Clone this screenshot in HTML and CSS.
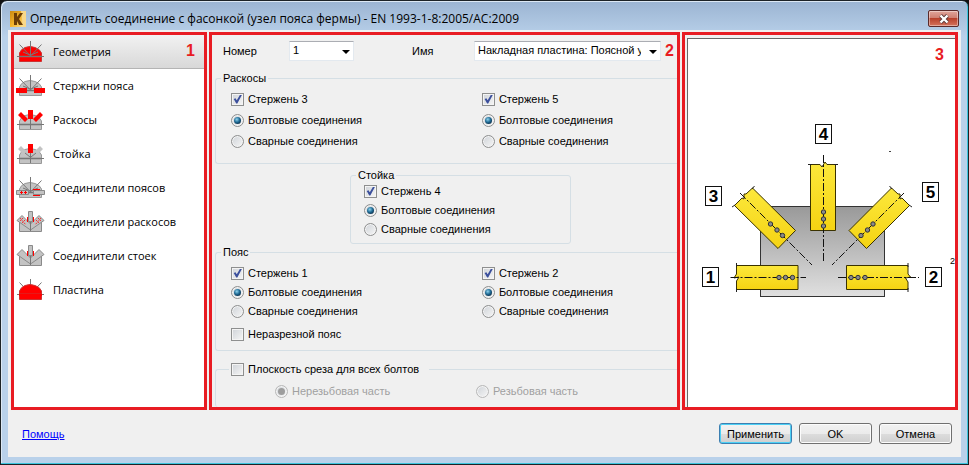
FILE: index.html
```html
<!DOCTYPE html>
<html lang="ru">
<head>
    <meta charset="UTF-8">
    <meta name="viewport" content="width=device-width, initial-scale=1.0">
    <title>Определить соединение с фасонкой</title>
    <link rel="stylesheet" href="styles.css">
</head>
<body>
    <!-- Shared icon parts -->
    <svg class="sprite" aria-hidden="true">
        <defs>
            <g id="dome">
                <path d="M3.5 16V13Q5 9 9 7.500Q14 5.500 19 7.500Q24 9 25.500 13V16Z"/>
                <path d="M3.500 17H25.500V21.500H3.500Z"/>
            </g>
            <path id="rays" fill="none" stroke="#777" d="M1 16.500H28M14.500 1V16M14 15.500L3.500 4.500M15 15.500L25.500 4.500M14 15L7 12M15 15L22 12"/>
            <path id="gusset" fill="#c3c3c3" stroke="#8a8a8a" d="M3.500 12H25.500V21.500H3.500Z"/>
            <g id="arms" fill="#c3c3c3" stroke="#8a8a8a">
                <path d="M1 10.500L6 5.500L14.500 14V20Z"/>
                <path d="M28 10.500L23 5.500L14.500 14V20Z"/>
                <path d="M12.500 1.500H16.500V11.500H12.500Z"/>
                <path d="M14.500 12V21" fill="none" stroke="#777"/>
            </g>
        </defs>
    </svg>

    <div class="window">
        <header class="titlebar">
            <svg class="app-icon" width="16" height="16" viewBox="0 0 16 16">
                <defs>
                    <linearGradient id="gold" x1="0" y1="0" x2="1" y2="1">
                        <stop offset="0" stop-color="#c98a12"/>
                        <stop offset="0.500" stop-color="#f3b32a"/>
                        <stop offset="1" stop-color="#ffe9a8"/>
                    </linearGradient>
                </defs>
                <rect width="16" height="16" fill="url(#gold)"/>
                <path d="M11 0H16V16H13Z" fill="#f9d88a"/>
                <path d="M4 2H7V6L10 2H13L9 8L13 14H9L7 10V14H4Z" fill="#6b3d05"/>
            </svg>
            <h1>Определить соединение с фасонкой (узел пояса фермы) - EN 1993-1-8:2005/AC:2009</h1>
            <button type="button" class="close" aria-label="Закрыть">
                <svg width="12" height="10" viewBox="0 0 12 10">
                    <path d="M2.500 1.500L9.500 8.500M9.500 1.500L2.500 8.500" stroke="#5b3a3a" stroke-width="4"/>
                    <path d="M2.500 1.500L9.500 8.500M9.500 1.500L2.500 8.500" stroke="#fff" stroke-width="2.400"/>
                </svg>
            </button>
        </header>

        <div class="client">
            <div class="panels">
                <nav class="panel sidebar">
                    <span class="mark">1</span>
                    <button type="button" class="nav-item active">
                        <svg width="30" height="24" viewBox="0 0 30 24"><use href="#dome" fill="#f00" stroke="#c33"/><use href="#rays"/></svg>
                        Геометрия
                    </button>
                    <button type="button" class="nav-item">
                        <svg width="30" height="24" viewBox="0 0 30 24">
                            <use href="#dome" fill="#c3c3c3" stroke="#999"/><use href="#rays"/>
                            <path d="M0 14H11V19H0ZM18 14H29V19H18Z" fill="#f00"/>
                        </svg>
                        Стержни пояса
                    </button>
                    <button type="button" class="nav-item">
                        <svg width="30" height="24" viewBox="0 0 30 24">
                            <use href="#dome" fill="#c3c3c3" stroke="#999"/>
                            <path d="M1 16.500H28M14.500 10V21" stroke="#777"/>
                            <path d="M12 2H17V11H12ZM2 7L5 4L12 11L9 14ZM27 7L24 4L17 11L20 14Z" fill="#f00"/>
                        </svg>
                        Раскосы
                    </button>
                    <button type="button" class="nav-item">
                        <svg width="30" height="24" viewBox="0 0 30 24">
                            <use href="#dome" fill="#c3c3c3" stroke="#999"/>
                            <path d="M2 7L5 4L12 11L9 14ZM27 7L24 4L17 11L20 14Z" fill="#c3c3c3"/>
                            <path d="M1 16.500H28M14.500 10V21M14 15L9 11M15 15L20 11" stroke="#777" fill="none"/>
                            <path d="M12 2H17V11H12Z" fill="#f00"/>
                        </svg>
                        Стойка
                    </button>
                    <button type="button" class="nav-item">
                        <svg width="30" height="24" viewBox="0 0 30 24">
                            <use href="#dome" fill="#c3c3c3" stroke="#999"/><use href="#rays"/>
                            <path d="M0.500 14.500H12.500V18.500H0.500ZM17.500 14.500H28.500V18.500H17.500Z" fill="#c3c3c3" stroke="#888"/>
                            <path d="M4 16.500H7M8 16.500H11M5.500 15V18M9.500 15V18M17 13.500H24M17 19.500H24" stroke="#f00"/>
                        </svg>
                        Соединители поясов
                    </button>
                    <button type="button" class="nav-item">
                        <svg width="30" height="24" viewBox="0 0 30 24">
                            <use href="#gusset"/><use href="#arms"/>
                            <path d="M4 8L10 15M7 8L4 11M9 10L6 13M25 8L19 15M22 8L25 11M20 10L23 13" stroke="#e33" stroke-dasharray="2 1"/>
                            <path d="M11.500 7V12M17.500 7V12" stroke="#f00"/>
                        </svg>
                        Соединители раскосов
                    </button>
                    <button type="button" class="nav-item">
                        <svg width="30" height="24" viewBox="0 0 30 24">
                            <use href="#gusset"/><use href="#arms"/>
                            <path d="M11.500 7V12M17.500 7V12" stroke="#f00"/>
                        </svg>
                        Соединители стоек
                    </button>
                    <button type="button" class="nav-item">
                        <svg width="30" height="24" viewBox="0 0 30 24">
                            <use href="#rays"/><use href="#dome" fill="#f00" stroke="#c33"/>
                            <path d="M3 16H26V18H3Z" fill="#f00"/>
                        </svg>
                        Пластина
                    </button>
                </nav>

                <form class="panel settings">
                    <span class="mark">2</span>
                    <div class="top-row">
                        <label for="number">Номер</label>
                        <span class="select number">
                            <select id="number" name="number">
                                <option>1</option>
                            </select>
                        </span>
                        <label for="name">Имя</label>
                        <span class="select name">
                            <select id="name" name="name">
                                <option>Накладная пластина: Поясной узел</option>
                            </select>
                        </span>
                    </div>

                    <fieldset class="group diagonals">
                        <legend>Раскосы</legend>
                        <div class="columns">
                            <div class="options">
                                <label><input type="checkbox" checked>Стержень 3</label>
                                <label><input type="radio" name="bar3" checked>Болтовые соединения</label>
                                <label><input type="radio" name="bar3">Сварные соединения</label>
                            </div>
                            <div class="options">
                                <label><input type="checkbox" checked>Стержень 5</label>
                                <label><input type="radio" name="bar5" checked>Болтовые соединения</label>
                                <label><input type="radio" name="bar5">Сварные соединения</label>
                            </div>
                        </div>
                    </fieldset>

                    <fieldset class="group post">
                        <legend>Стойка</legend>
                        <div class="options">
                            <label><input type="checkbox" checked>Стержень 4</label>
                            <label><input type="radio" name="bar4" checked>Болтовые соединения</label>
                            <label><input type="radio" name="bar4">Сварные соединения</label>
                        </div>
                    </fieldset>

                    <fieldset class="group chord">
                        <legend>Пояс</legend>
                        <div class="columns">
                            <div class="options">
                                <label><input type="checkbox" checked>Стержень 1</label>
                                <label><input type="radio" name="bar1" checked>Болтовые соединения</label>
                                <label><input type="radio" name="bar1">Сварные соединения</label>
                                <label class="spaced"><input type="checkbox">Неразрезной пояс</label>
                            </div>
                            <div class="options">
                                <label><input type="checkbox" checked>Стержень 2</label>
                                <label><input type="radio" name="bar2" checked>Болтовые соединения</label>
                                <label><input type="radio" name="bar2">Сварные соединения</label>
                            </div>
                        </div>
                    </fieldset>

                    <fieldset class="group shear">
                        <legend><label><input type="checkbox">Плоскость среза для всех болтов</label></legend>
                        <div class="choices">
                            <label><input type="radio" name="shear" checked disabled>Нерезьбовая часть</label>
                            <label><input type="radio" name="shear" disabled>Резьбовая часть</label>
                        </div>
                    </fieldset>
                </form>

                <section class="panel preview">
                    <span class="mark">3</span>
                    <div class="canvas">
                        <svg class="diagram" viewBox="0 0 267 200">
                            <defs>
                                <linearGradient id="plate" x1="0" y1="0" x2="0" y2="1">
                                    <stop offset="0" stop-color="#999"/>
                                    <stop offset="1" stop-color="#e0e0e0"/>
                                </linearGradient>
                                <linearGradient id="steel" x1="0" y1="0" x2="0" y2="1">
                                    <stop offset="0" stop-color="#fce83c"/>
                                    <stop offset="1" stop-color="#f5d312"/>
                                </linearGradient>
                            </defs>
                            <rect x="72.500" y="96.500" width="124" height="90" fill="url(#plate)" stroke="#333"/>

                            <g fill="url(#steel)" stroke="#3a3200">
                                <path d="M48.500 155.500H110V179.500H48.500V171L51 167L46 168L48.500 164Z"/>
                                <path d="M158.500 155.500H220V164L222.500 167L217.500 168L220 172V179.500H158.500Z"/>
                                <path d="M122.500 54.500H132L134 57L137 52L139 54.500H147.500V120.500H122.500Z"/>
                                <path d="M64.500 78L107.500 120.500L90 138.500L46.500 95.500L54 88L56 89L56 84L58 84Z"/>
                                <path d="M203.500 78L161 120.500L178.500 138.500L221.500 95.500L214 88L212 89L212 84L210 84Z"/>
                            </g>
                            <path d="M48.500 153V157M48.500 178V182M220 153V157M220 178V182M120 54.500H124M146 54.500H150M66.500 76L64 79M44 97L47 95M201.500 76L204 79M224 97L221 95" stroke="#222"/>

                            <g stroke="#111" stroke-dasharray="8 2 2 2">
                                <path d="M42.500 167.500H118"/>
                                <path d="M150 167.500H231"/>
                                <path d="M135.500 45V152"/>
                                <path d="M52 83L124 155"/>
                                <path d="M216 83L144 155"/>
                            </g>

                            <g fill="#8a8a8a" stroke="#333">
                                <circle cx="91" cy="167.500" r="2.200"/><circle cx="97.500" cy="167.500" r="2.200"/><circle cx="104.500" cy="167.500" r="2.200"/>
                                <circle cx="163" cy="167.500" r="2.200"/><circle cx="170" cy="167.500" r="2.200"/><circle cx="177" cy="167.500" r="2.200"/>
                                <circle cx="135.500" cy="102" r="2.200"/><circle cx="135.500" cy="109" r="2.200"/><circle cx="135.500" cy="116" r="2.200"/>
                                <circle cx="82.500" cy="114" r="2.200"/><circle cx="89" cy="120" r="2.200"/><circle cx="94.500" cy="125.500" r="2.200"/>
                                <circle cx="185" cy="114" r="2.200"/><circle cx="179.500" cy="120" r="2.200"/><circle cx="173" cy="125.500" r="2.200"/>
                            </g>

                            <g fill="#fff" stroke="#111">
                                <rect x="14.500" y="157.500" width="16" height="19"/>
                                <rect x="237.500" y="157.500" width="16" height="19"/>
                                <rect x="17.500" y="76.500" width="16" height="19"/>
                                <rect x="127.500" y="14.500" width="16" height="19"/>
                                <rect x="234.500" y="72.500" width="16" height="19"/>
                            </g>
                            <g class="bar-number">
                                <text x="22.500" y="173">1</text>
                                <text x="245.500" y="173">2</text>
                                <text x="25.500" y="92">3</text>
                                <text x="135.500" y="30">4</text>
                                <text x="242.500" y="88">5</text>
                            </g>
                            <path d="M201 41.500H203" stroke="#444"/>
                            <text class="scale" x="262" y="154">2</text>
                        </svg>
                    </div>
                </section>
            </div>

            <footer class="footer">
                <a href="#help">Помощь</a>
                <div class="buttons">
                    <button type="button" class="default">Применить</button>
                    <button type="button">OK</button>
                    <button type="button">Отмена</button>
                </div>
            </footer>
        </div>
    </div>
</body>
</html>
```
FILE: styles.css
```css
* {
    box-sizing: border-box;
}

body {
    margin: 0;
    background-color: #111;
    font-family: "Liberation Sans", Arial, sans-serif;
    font-size: 11px;
    color: #000;
}

.sprite {
    position: absolute;
    width: 0;
    height: 0;
}

.window {
    display: flex;
    flex-direction: column;
    height: 100vh;
    padding: 0 7px 7px;
    border: 1px solid #1c2226;
    border-radius: 7px 7px 0 0;
    background: linear-gradient(#9bb4d2, #b9d1ea 36px);
    box-shadow: inset -1px -1px 0 #3cc4dc, inset 1px 1px 0 #dce8f4;
}

.titlebar {
    display: flex;
    align-items: center;
    gap: 4px;
    height: 29px;
    padding: 6px 2px 0;
}

.titlebar h1 {
    flex: 1;
    margin: 0;
    font-family: "Open Sans", "Noto Sans", sans-serif;
    font-size: 12px;
    font-weight: normal;
    line-height: 18px;
    white-space: nowrap;
}

.close {
    display: flex;
    align-items: center;
    justify-content: center;
    width: 31px;
    height: 17px;
    padding: 0;
    border: 1px solid #5a2a2a;
    border-radius: 2px;
    background: linear-gradient(#e0a59b, #d08072 45%, #b8412c 50%, #d4735c);
    box-shadow: inset 0 0 0 1px rgba(255, 255, 255, 0.4);
}

.client {
    display: flex;
    flex: 1;
    flex-direction: column;
    min-height: 0;
    background-color: #f0f0f0;
}

/* Panels */

.panels {
    display: grid;
    flex: 1;
    grid-template-columns: 196px 1fr 276px;
    gap: 2px;
    min-height: 0;
    padding: 2px 3px 0;
}

.panel {
    position: relative;
    min-width: 0;
    min-height: 0;
    overflow: hidden;
    border: 3px solid #e81c23;
}

.mark {
    position: absolute;
    top: 6px;
    right: 9px;
    z-index: 1;
    color: #e81c23;
    font-size: 16px;
    font-weight: bold;
    line-height: 20px;
}

/* Sidebar */

.sidebar {
    background-color: #fff;
}

.nav-item {
    display: flex;
    align-items: center;
    gap: 7px;
    width: 100%;
    height: 34px;
    padding: 0 2px;
    border: 0;
    border-bottom: 1px solid transparent;
    background: none;
    font-family: "Open Sans", "Noto Sans", sans-serif;
    font-size: 11px;
    text-align: left;
    white-space: nowrap;
}

.nav-item.active {
    border-bottom-color: #b4b4b4;
    background: linear-gradient(#f2f2f2, #d8d8d8);
}

/* Settings form */

.settings {
    display: flex;
    flex-direction: column;
    padding-left: 3px;
}

.settings .mark {
    right: 3px;
}

.top-row {
    display: flex;
    align-items: center;
    height: 36px;
    padding: 0 16px 4px 8px;
}

.top-row label {
    width: 66px;
}

.select {
    position: relative;
    height: 20px;
}

.select.number {
    width: 65px;
    margin-right: 58px;
}

.select.number + label {
    width: 62px;
}

.select.name {
    flex: 1;
    min-width: 0;
}

.select select {
    width: 100%;
    height: 20px;
    padding: 0 19px 2px 3px;
    border: 1px solid #e3e9ef;
    border-top-color: #abadb3;
    border-radius: 0;
    background-color: #fff;
    color: #000;
    font-family: inherit;
    font-size: 11px;
    appearance: none;
}

.select::after {
    content: "";
    position: absolute;
    top: 9px;
    right: 4px;
    border: 4px solid transparent;
    border-top-color: #000;
    border-bottom: 0;
    pointer-events: none;
}

.group {
    min-width: 0;
    margin: 0;
    padding: 5px 0 0 5px;
    border: 1px solid #d5dfe5;
    border-right: 0;
    border-radius: 3px 0 0 3px;
}

.group legend {
    padding: 0 2px;
    line-height: 14px;
}

.columns {
    display: grid;
    grid-template-columns: 9fr 7fr;
    padding-left: 10px;
}

.options {
    display: flex;
    flex-direction: column;
    align-items: flex-start;
    gap: 1px;
}

.group label {
    display: flex;
    align-items: center;
    gap: 4px;
    line-height: 18px;
    white-space: nowrap;
}

.diagonals {
    padding-bottom: 13px;
}

.diagonals .options {
    gap: 3px;
}

.post {
    width: 221px;
    margin: 4px 0 1px 135px;
    padding: 0 0 5px 5px;
    border-right: 1px solid #d5dfe5;
    border-radius: 3px;
}

.post .options {
    padding-left: 8px;
}

.chord {
    padding-bottom: 7px;
}

.spaced {
    margin-top: 4px;
}

.shear {
    flex: 1;
    margin-top: 9px;
    padding-top: 4px;
    border-bottom: 0;
}

.shear legend {
    margin-left: 8px;
    padding-right: 10px;
}

.choices {
    display: grid;
    grid-template-columns: 1fr 1fr;
    padding-left: 54px;
    color: #a0a0a0;
}

input[type="checkbox"],
input[type="radio"] {
    position: relative;
    width: 13px;
    height: 13px;
    margin: 0;
    border: 1px solid #8e8f8f;
    background: linear-gradient(135deg, #cfd3d8, #f6f6f6);
    box-shadow: inset 0 0 0 1px #f4f4f4;
    appearance: none;
}

input[type="radio"] {
    border-radius: 50%;
}

input[type="checkbox"]:checked::after {
    content: "";
    position: absolute;
    inset: 1px;
    background-color: #3b4f9c;
    clip-path: polygon(8% 50%, 28% 42%, 42% 65%, 78% 2%, 100% 2%, 48% 100%, 36% 100%);
}

input[type="radio"]:checked::after {
    content: "";
    position: absolute;
    inset: 2px;
    border-radius: 50%;
    background: radial-gradient(circle at 40% 35%, #8fd3ee, #1f6a94 45%, #0b2c47 80%);
}

input:disabled {
    border-color: #b8b8b8;
}

input[type="radio"]:disabled:checked::after {
    background: #9d9d9d;
}

/* Preview */

.preview {
    display: flex;
    padding: 3px 0 0 2px;
}

.preview .mark {
    top: 10px;
    right: 11px;
}

.canvas {
    display: flex;
    flex: 1;
    align-items: center;
    min-width: 0;
    padding-bottom: 26px;
    border-top: 1px solid #696969;
    border-left: 1px solid #696969;
    background-color: #fff;
}

.diagram {
    width: 100%;
}

.bar-number {
    font-size: 17px;
    font-weight: bold;
    text-anchor: middle;
}

.scale {
    font-size: 9px;
}

/* Footer */

.footer {
    display: flex;
    align-items: center;
    justify-content: space-between;
    height: 47px;
    padding: 0 9px 0 14px;
}

.footer a {
    color: #00f;
}

.buttons {
    display: flex;
    gap: 7px;
}

.buttons button {
    width: 73px;
    height: 21px;
    padding: 0;
    border: 1px solid #707070;
    border-radius: 3px;
    background: linear-gradient(#f2f2f2, #ebebeb 50%, #dddddd 50%, #cfcfcf);
    box-shadow: inset 0 0 0 1px #fcfcfc;
    font-family: inherit;
    font-size: 11px;
}

.buttons .default {
    border-color: #3c7fb1;
    box-shadow: inset 0 0 0 1px #4cd0f5;
}
```
